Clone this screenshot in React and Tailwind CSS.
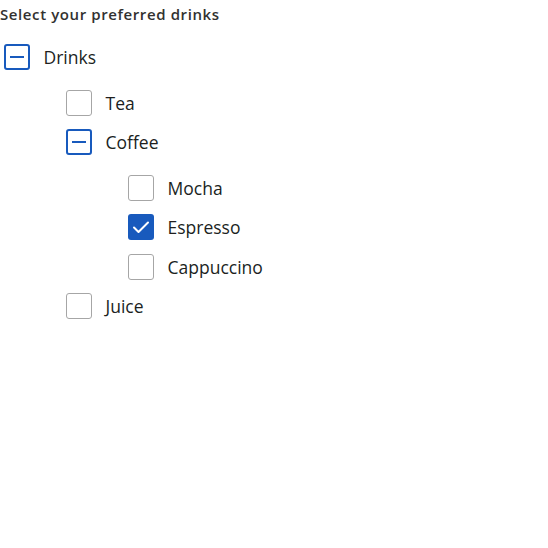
import React, { useState } from 'react';

const tree = {
    id: 'drinks', label: 'Drinks', children: [
        { id: 'tea', label: 'Tea' },
        {
            id: 'coffee', label: 'Coffee', children: [
                { id: 'mocha', label: 'Mocha' },
                { id: 'espresso', label: 'Espresso' },
                { id: 'cappuccino', label: 'Cappuccino' },
            ]
        },
        { id: 'juice', label: 'Juice' },
    ]
};

const leaves = (node) => node.children ? node.children.flatMap(leaves) : [node.id];

const Box = ({ state }) => {
    if (state === 'checked') {
        return (
            <span className="w-[26px] h-[26px] rounded-[3px] bg-[#185abd] flex items-center justify-center shrink-0">
                <svg width="26" height="26" viewBox="0 0 26 26" fill="none">
                    <path d="M6 13.5l4.5 4.5L20 8.5" stroke="white" strokeWidth="2" strokeLinecap="round" strokeLinejoin="round" />
                </svg>
            </span>
        );
    }
    if (state === 'mixed') {
        return (
            <span className="w-[26px] h-[26px] rounded-[3px] border-2 border-[#185abd] flex items-center justify-center shrink-0">
                <span className="w-[14px] h-[2px] bg-[#185abd]"></span>
            </span>
        );
    }
    return <span className="w-[26px] h-[26px] rounded-[3px] border border-[#a6a6a6] bg-white shrink-0"></span>;
};

const Node = ({ node, checked, toggle }) => {
    const ids = leaves(node);
    const count = ids.filter(id => checked.includes(id)).length;
    const state = count === 0 ? 'none' : count === ids.length ? 'checked' : 'mixed';
    return (
        <div>
            <div className="h-[39.5px] flex items-center gap-[13.5px] cursor-pointer" onClick={() => toggle(ids, state !== 'checked')}>
                <Box state={state} />
                <span className="text-[17.5px] text-[#201f1e]">{node.label}</span>
            </div>
            {node.children && (
                <div className="pl-[62px] mt-[6px]">
                    {node.children.map(c => <Node key={c.id} node={c} checked={checked} toggle={toggle} />)}
                </div>
            )}
        </div>
    );
};

export default function App() {
    const [checked, setChecked] = useState(['espresso']);
    const toggle = (ids, on) => {
        setChecked(prev => on ? [...new Set([...prev, ...ids])] : prev.filter(id => !ids.includes(id)));
    };
    return (
        <div className="bg-white min-h-screen font-['Open_Sans',sans-serif] pt-[4px]">
            <div className="text-[15px] leading-[20px] font-semibold tracking-[0.6px] text-[#323130]">Select your preferred drinks</div>
            <div className="mt-[13.5px] pl-[4px]">
                <Node node={tree} checked={checked} toggle={toggle} />
            </div>
        </div>
    );
}
